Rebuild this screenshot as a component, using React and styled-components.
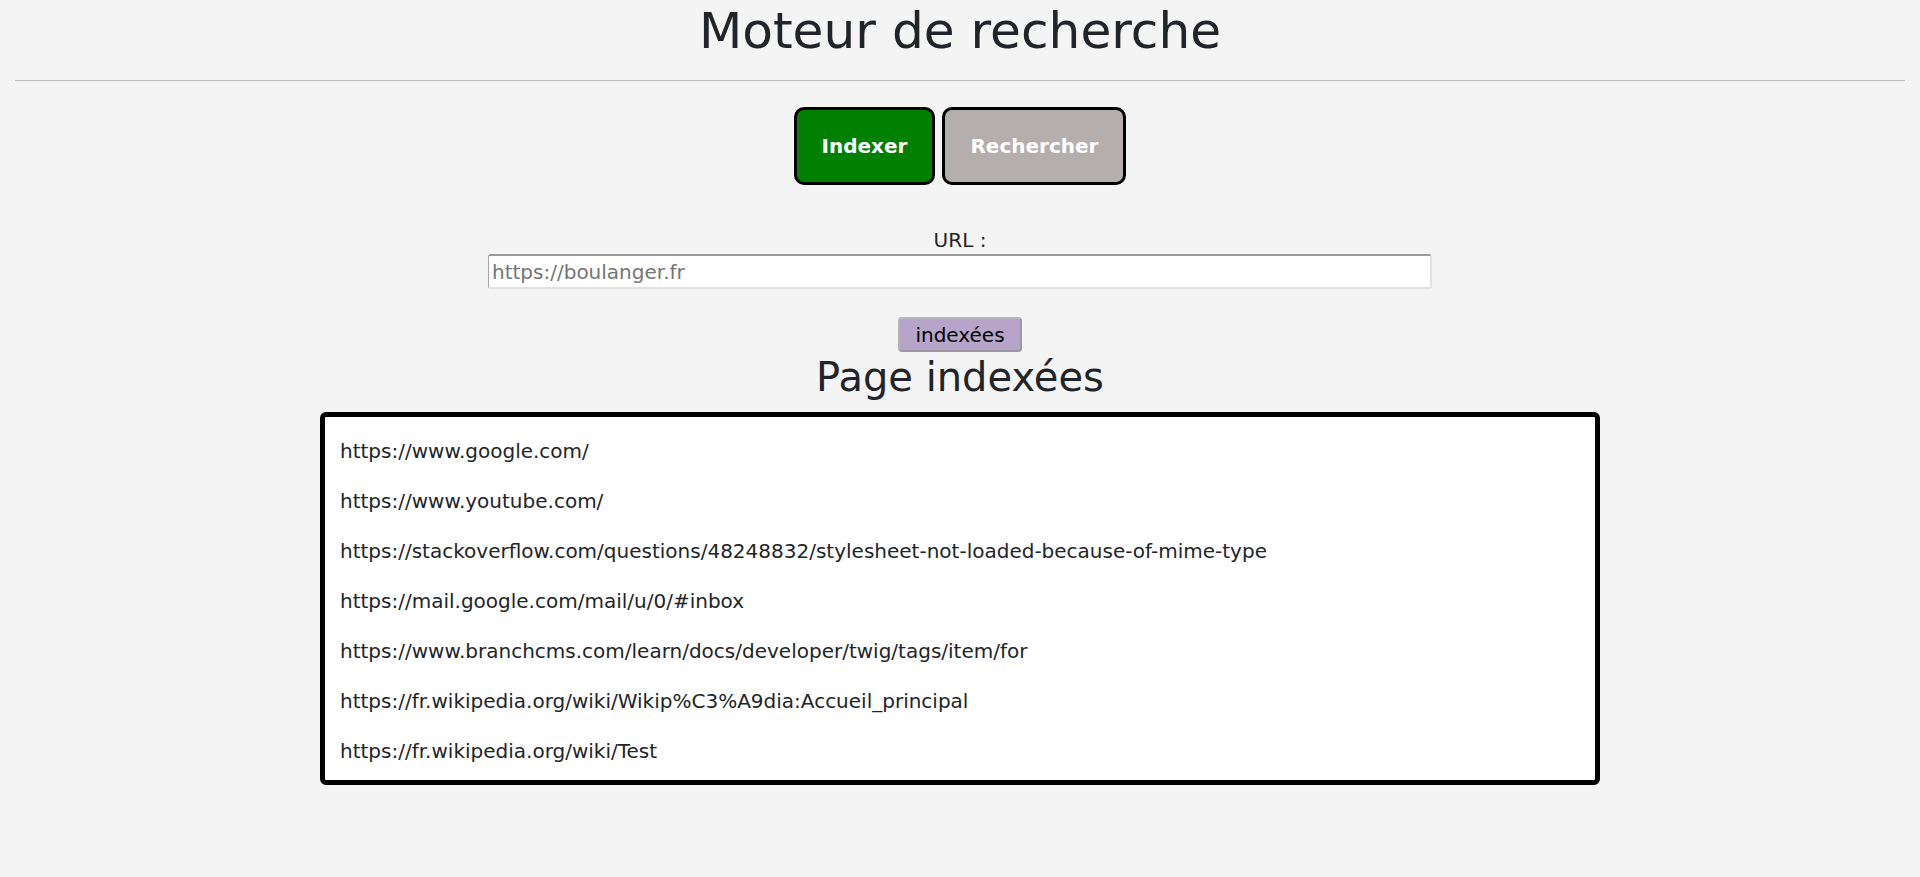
import React from "react";
import styled, { createGlobalStyle } from "styled-components";

const GlobalStyle = createGlobalStyle`
  body {
    margin: 0;
    background-color: #f4f4f4;
    font-family: "DejaVu Sans", Verdana, sans-serif;
    color: #212529;
  }
`;

const Page = styled.div`
  padding: 0 15px;
  text-align: center;
`;

const Title = styled.h1`
  margin: 0;
  font-size: 50.2px;
  font-weight: 400;
  line-height: 61px;
`;

const Divider = styled.hr`
  margin: 19px 0 26px;
  border: 0;
  border-top: 1px solid #bfbfbf;
`;

const Tabs = styled.div`
  display: flex;
  justify-content: center;
  gap: 7px;
`;

const Tab = styled.button`
  height: 78px;
  padding: 0 25px;
  border: 3px solid #000;
  border-radius: 10px;
  background-color: ${(props) => (props.$active ? "#008000" : "#b4afad")};
  color: #fff;
  font-family: inherit;
  font-size: 20px;
  font-weight: 700;
  cursor: pointer;
`;

const Form = styled.div`
  display: flex;
  flex-direction: column;
  align-items: center;
  margin-top: 41px;
`;

const Label = styled.label`
  font-size: 20px;
  line-height: 28px;
`;

const UrlInput = styled.input`
  box-sizing: border-box;
  width: 944px;
  height: 35px;
  padding: 1px 3px;
  border-style: solid;
  border-width: 2px 2px 2px 1px;
  border-color: #9a9a9a #e2e2e2 #e2e2e2 #a6a6a6;
  border-radius: 3px;
  background: #fff;
  font-family: inherit;
  font-size: 20px;
  color: #212529;
  &::placeholder {
    color: #757575;
  }
`;

const ListButton = styled.button`
  margin-top: 28px;
  height: 35px;
  padding: 0 15px;
  border: 2px solid #9d97a3;
  border-top-color: #b9b3bf;
  border-left-color: #b9b3bf;
  border-radius: 4px;
  background-color: #b6a5c9;
  color: #000;
  font-family: inherit;
  font-size: 20px;
  cursor: pointer;
`;

const SectionTitle = styled.h2`
  margin: 1px 0 0;
  font-size: 40px;
  font-weight: 400;
  line-height: 48px;
`;

const ResultBox = styled.div`
  width: 1280px;
  box-sizing: border-box;
  margin: 11px auto 0;
  padding: 19px 15px 14px;
  border: 5px solid #000;
  border-radius: 6px;
  background-color: #fff;
  text-align: left;
  display: flex;
  flex-direction: column;
  gap: 20px;
`;

const ResultItem = styled.p`
  margin: 0;
  font-size: 20px;
  line-height: 30px;
`;

const pages = [
  "https://www.google.com/",
  "https://www.youtube.com/",
  "https://stackoverflow.com/questions/48248832/stylesheet-not-loaded-because-of-mime-type",
  "https://mail.google.com/mail/u/0/#inbox",
  "https://www.branchcms.com/learn/docs/developer/twig/tags/item/for",
  "https://fr.wikipedia.org/wiki/Wikip%C3%A9dia:Accueil_principal",
  "https://fr.wikipedia.org/wiki/Test",
];

export default function App() {
  return (
    <>
      <GlobalStyle />
      <Page>
        <Title>Moteur de recherche</Title>
        <Divider />
        <Tabs>
          <Tab $active>Indexer</Tab>
          <Tab>Rechercher</Tab>
        </Tabs>
        <Form>
          <Label htmlFor="url">URL :</Label>
          <UrlInput id="url" type="text" placeholder="https://boulanger.fr" />
          <ListButton>indexées</ListButton>
        </Form>
        <SectionTitle>Page indexées</SectionTitle>
        <ResultBox>
          {pages.map((p) => (
            <ResultItem key={p}>{p}</ResultItem>
          ))}
        </ResultBox>
      </Page>
    </>
  );
}
